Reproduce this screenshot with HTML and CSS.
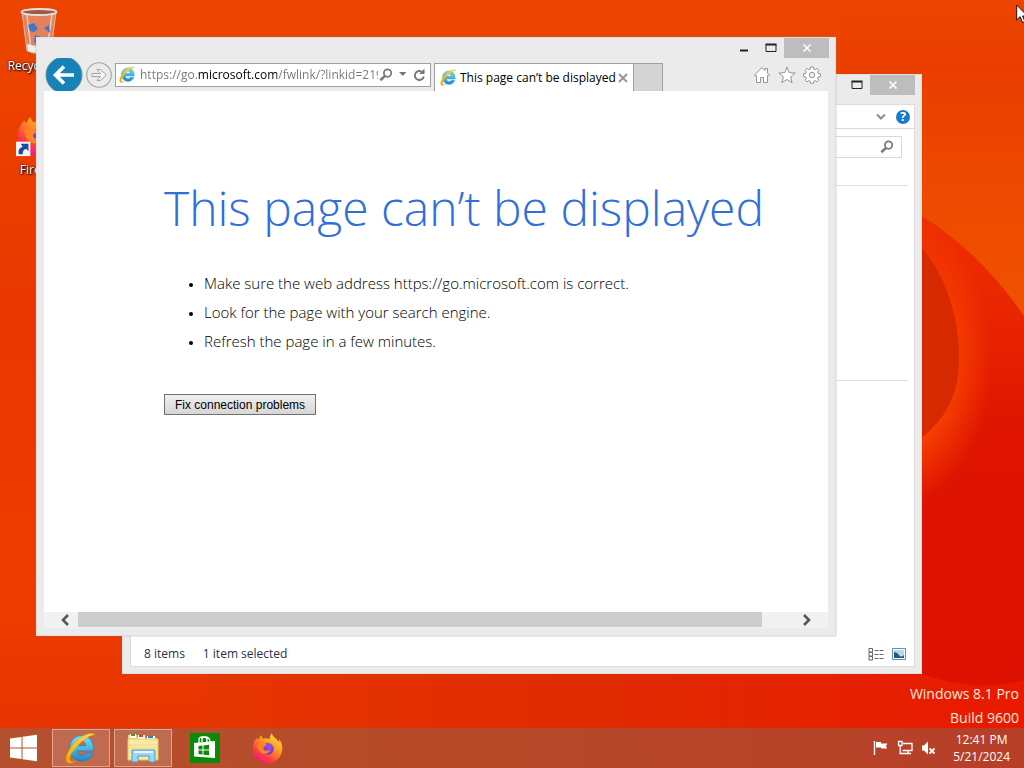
FILE: index.html
```html
<!DOCTYPE html>
<html lang="en">
<head>
<meta charset="utf-8">
<meta name="viewport" content="width=device-width, initial-scale=1">
<title>This page can’t be displayed</title>
<link rel="stylesheet" href="styles.css">
</head>
<body>
<svg width="0" height="0" class="defs" aria-hidden="true">
  <defs>
    <linearGradient id="ieBlue" x1="0" y1="0" x2="0" y2="1"><stop offset="0" stop-color="#7fdcf8"/><stop offset=".5" stop-color="#46b8ea"/><stop offset="1" stop-color="#1e86cf"/></linearGradient>
    <linearGradient id="ieGold" x1="0" y1="1" x2="1" y2="0"><stop offset="0" stop-color="#f2a900"/><stop offset="1" stop-color="#ffe04a"/></linearGradient>
    <linearGradient id="foxFire" x1=".9" y1="0" x2=".2" y2="1"><stop offset="0" stop-color="#fff04a"/><stop offset=".4" stop-color="#ff9a1f"/><stop offset=".75" stop-color="#ff3a48"/><stop offset="1" stop-color="#e31587"/></linearGradient>
    <radialGradient id="foxCore" cx=".6" cy=".3" r=".8"><stop offset="0" stop-color="#a04df0"/><stop offset="1" stop-color="#5636c8"/></radialGradient>
    <symbol id="ie" viewBox="0 0 32 32">
      <path d="M16.600 3.600C9.800 3.600 4.800 9 4.800 16S9.800 29 16.800 29c5.300 0 9.400-2.800 11.200-7.900h-7c-.8 1.500-2.200 2.300-4 2.300-2.800 0-4.700-1.700-4.900-4.500h16.500c.5-9-4.200-15.300-12-15.300zM12.100 13.700c.5-2.700 2.200-4.200 4.600-4.200s4 1.500 4.300 4.200z" fill="url(#ieBlue)" stroke="#1779b8" stroke-width=".6"/>
      <path d="M29.900 3.500C28.600-.4 19.200 1.500 11.300 8.900 3.300 16.400-1 26.900 2.300 30.200c1.800 1.800 5.100.9 8.500-.9-2.800.8-4.900.5-5.700-.8-1.700-3 2.500-9.500 8.300-15.400C19.500 7 27.300 1.400 29.900 3.500z" fill="url(#ieGold)" stroke="#d99a00" stroke-width=".4"/>
    </symbol>
    <symbol id="firefox" viewBox="0 0 32 32">
      <path d="M20.500.500c-2 1.800-2.500 4-1.800 6-2-1-4.500-1.300-6.700-.5-1.500-.8-2-2.300-2-3.700-1.700 1-2.700 2.700-3 4.500-.8-.3-1.400-1-1.700-2C2.500 7.500.8 11.800.8 16c0 8.600 6.700 15.300 15.200 15.300S31.300 24.600 31.300 16c0-3.500-1.200-7-3.300-9.500.2 1.200.2 2.300 0 3.200C26.300 6.200 22 5 20.500.5z" fill="url(#foxFire)"/>
      <circle cx="16.500" cy="16.300" r="6" fill="url(#foxCore)"/>
      <path d="M5.500 11.500c2.500-1.300 4.500-1 6 .2 1.200-.6 2.600-.5 3.800 0-.9 1.700-2.600 2.100-3.300 3.300-.8 1.500.4 3.200 2.500 3.200 1.800 0 3-.8 4.500-.4-.8 3-5 4.600-8.300 3.100-3.700-1.600-5.700-5.200-5.200-9.400z" fill="#ff8320"/>
    </symbol>
    <symbol id="loupe" viewBox="0 0 16 16"><circle cx="9.800" cy="5.800" r="4.200" fill="none" stroke="#777" stroke-width="2"/><path d="M6.600 9.200 1.500 14" stroke="#777" stroke-width="2.800"/></symbol>
  </defs>
</svg>
<main class="desktop">
  <svg class="wallpaper" viewBox="0 0 1024 728" preserveAspectRatio="none" aria-hidden="true">
    <defs>
      <linearGradient id="base" x1="0" y1="0" x2="0" y2="1"><stop offset="0" stop-color="#ed4500"/><stop offset=".45" stop-color="#e83700"/><stop offset=".8" stop-color="#ed3c00"/><stop offset="1" stop-color="#e83400"/></linearGradient>
      <linearGradient id="warm" x1="0" y1="0" x2="0" y2="1"><stop offset="0" stop-color="#ed4500"/><stop offset=".2" stop-color="#ea3e00"/><stop offset=".6" stop-color="#ee4a00"/><stop offset="1" stop-color="#f05200"/></linearGradient>
      <linearGradient id="petal" x1="0" y1="0" x2="0" y2="1"><stop offset="0" stop-color="#ef3300"/><stop offset=".22" stop-color="#ea2600"/><stop offset=".45" stop-color="#df1500"/><stop offset="1" stop-color="#dc1000"/></linearGradient>
      <radialGradient id="glow"><stop offset=".6" stop-color="#f63d00"/><stop offset="1" stop-color="#f63d00" stop-opacity="0"/></radialGradient>
      <linearGradient id="floor" x1="0" y1="0" x2="1" y2="0"><stop offset="0" stop-color="#e63600"/><stop offset=".5" stop-color="#e02a00"/><stop offset="1" stop-color="#e91900"/></linearGradient>
    </defs>
    <rect width="1024" height="728" fill="url(#base)"/>
    <path d="M840 0H1024V330L840 200z" fill="url(#warm)"/>
    <path d="M860 186Q960 222 1024 316V728H780z" fill="url(#petal)"/>
    <ellipse cx="900" cy="360" rx="92" ry="145" fill="url(#glow)"/>
    <path d="M890 220C940 250 959 310 959 357S940 430 890 460z" fill="#d62900"/>
    <path d="M208 673Q207 704 200 728H1024V680Q980 694 918 673z" fill="url(#floor)"/>
  </svg>

  <div class="shortcut bin">
    <svg viewBox="0 0 40 46" aria-hidden="true"><path d="M3 4 8 43q12 5 24 0L37 4z" fill="#d9cfcb" fill-opacity=".45" stroke="#c9c1bd"/><path d="M8 7l4 35M33 7l-5 35" stroke="#fff" stroke-opacity=".6" stroke-width="1.500"/><path d="M8 36q12 4 24 0l-1 7q-11 4-22 0z" fill="#eee"/><ellipse cx="20" cy="4" rx="17.500" ry="3" fill="#9b5a43" stroke="#e7dfda" stroke-width="1.800"/><path d="m9 17 6-2 4 6-4 3-4-1zM15 34l1-7 6 2 2 6-5 3zM25 20l5-3 1 8z" fill="#3c78cf"/></svg>
    <span>Recycle Bin</span>
  </div>
  <div class="shortcut fox">
    <svg viewBox="0 0 48 48" aria-hidden="true"><use href="#firefox" x="1" y="2" width="46" height="46"/><rect x="0" y="31" width="15" height="15" fill="#f4f4f4"/><path d="M3 44c-1-5 1-7 4-7.500L5 33h8v8l-2-2.500c-3 0-4 2-4 5.500z" fill="#174a9c"/></svg>
    <span>Firefox</span>
  </div>

  <section class="window explorer" aria-label="File Explorer">
    <header class="titlebar">
      <button class="cap" aria-label="Maximize"><svg viewBox="0 0 12 10"><path d="M1 1.500h10v7H1z" fill="none" stroke="#222"/><path d="M.5 1.500h11" stroke="#222" stroke-width="2"/></svg></button>
      <button class="cap close" aria-label="Close"><svg viewBox="0 0 10 10"><path d="m1.500 1.500 7 7m0-7-7 7" stroke="#fff" stroke-width="1.600"/></svg></button>
    </header>
    <div class="pane">
      <div class="ribbon">
        <button class="plain" aria-label="Expand ribbon"><svg width="10" height="8" viewBox="0 0 10 8"><path d="m1 1.500 4 4 4-4" fill="none" stroke="#8c8c8c" stroke-width="2"/></svg></button>
        <button class="help" aria-label="Help">?</button>
      </div>
      <div class="search"><input type="text" aria-label="Search"><svg width="14" height="14"><use href="#loupe"/></svg></div>
      <hr class="rule first">
      <hr class="rule second">
      <footer class="status"><span>8 items</span><span>1 item selected</span>
        <button class="plain view" aria-label="Details"><svg width="16" height="13" viewBox="0 0 16 13"><path d="M1 .5h3.500v3.500H1zM1 4.500h3.500V8H1zM1 8.500h3.500V12H1z" fill="#fff" stroke="#666"/><path d="M6.500 2.500h4m1 0h4m-9 4h4m1 0h4m-9 4h4m1 0h4" stroke="#666"/></svg></button>
        <button class="plain" aria-label="Large icons"><svg width="14" height="12" viewBox="0 0 14 12"><path d="M.5.5h13v11H.5z" fill="#fff" stroke="#5b91b8"/><path d="M2 2h10v8H2z" fill="#b5d8e8"/><path d="M2 4q3 0 5 3t5 0v3H2z" fill="#285a78"/></svg></button>
      </footer>
    </div>
  </section>

  <section class="window browser" aria-label="Internet Explorer">
    <header class="titlebar">
      <button class="cap" aria-label="Minimize"><svg viewBox="0 0 12 10"><path d="M2 7.500h8" stroke="#222" stroke-width="2"/></svg></button>
      <button class="cap" aria-label="Maximize"><svg viewBox="0 0 12 10"><path d="M1 1.500h10v7H1z" fill="none" stroke="#222"/><path d="M.5 1.500h11" stroke="#222" stroke-width="2"/></svg></button>
      <button class="cap close" aria-label="Close"><svg viewBox="0 0 10 10"><path d="m1.500 1.500 7 7m0-7-7 7" stroke="#fff" stroke-width="1.600"/></svg></button>
    </header>
    <nav class="toolbar">
      <button class="plain back" aria-label="Back"><svg width="38" height="38" viewBox="0 0 38 38"><circle cx="19" cy="19" r="18" fill="#1583b7" stroke="#6b8d9c"/><path d="M29 19H11m8-8.500L10.500 19l8.500 8.500" fill="none" stroke="#fff" stroke-width="3.600"/></svg></button>
      <button class="plain" aria-label="Forward"><svg width="26" height="26" viewBox="0 0 26 26"><circle cx="13" cy="13" r="12.300" fill="none" stroke="#a3a3a3" stroke-width="1.100"/><path d="M6 11.500h8.500L11 7.500h3.500L20.500 13l-6 5.500H11l3.500-4H6z" fill="#f4f4f4" stroke="#a3a3a3"/></svg></button>
      <div class="address">
        <svg width="17" height="17"><use href="#ie"/></svg>
        <input type="text" aria-label="Address" value="https://go.microsoft.com/fwlink/?linkid=219">
        <button class="plain" aria-label="Search"><svg width="14" height="14"><use href="#loupe"/></svg></button>
        <button class="plain" aria-label="Show address list"><svg width="8" height="5" viewBox="0 0 8 5"><path d="M0 0h7.500L3.800 4z" fill="#777"/></svg></button>
        <button class="plain" aria-label="Refresh"><svg width="13" height="14" viewBox="0 0 13 14"><path d="M10.800 8.500A4.500 4.500 0 1 1 8.500 3.500" fill="none" stroke="#777" stroke-width="1.900"/><path d="M11.500.5v5.500H6z" fill="#777"/></svg></button>
      </div>
      <div class="tab"><svg width="17" height="17"><use href="#ie"/></svg><span>This page can’t be displayed</span><button class="plain" aria-label="Close tab"><svg width="10" height="10" viewBox="0 0 10 10"><path d="m1 1 8 8m0-8L1 9" stroke="#999" stroke-width="2"/></svg></button></div>
      <button class="newtab" aria-label="New tab"></button>
      <div class="tools">
        <button class="plain" aria-label="Home"><svg width="18" height="18" viewBox="0 0 18 18"><path d="M1.500 9 9 1.500 12 4.500V2.500h2.500V7l2 2-1 1.200-1-.8v7.100h-4v-5h-3v5h-4V9.400l-1 .8z" fill="#fff" stroke="#949494"/></svg></button>
        <button class="plain" aria-label="Favorites"><svg width="18" height="18" viewBox="0 0 18 18"><path d="m9 1 2.200 5.600 6 .4-4.600 3.800 1.500 5.900L9 13.500l-5.100 3.200 1.500-5.900L.8 7l6-.4z" fill="#fff" stroke="#949494"/></svg></button>
        <button class="plain" aria-label="Tools"><svg width="18" height="18" viewBox="0 0 18 18"><path d="M7.500 1h3l.4 2.200 1.300.5L14 2.400 15.800 4.300l-1.300 1.800.6 1.300 2.200.3v2.800l-2.200.4-.6 1.300 1.300 1.800-1.900 1.900-1.800-1.300-1.300.5-.4 2.200h-2.900l-.4-2.200-1.300-.5L4 15.900 2.100 14l1.300-1.800-.6-1.300-2.200-.4V7.700l2.200-.3.600-1.300-1.300-1.800L4 2.400l1.800 1.300 1.300-.5z" fill="#fff" stroke="#949494"/><circle cx="9" cy="9" r="2.800" fill="#eee" stroke="#949494"/></svg></button>
      </div>
    </nav>
    <div class="page">
      <article class="error">
        <h1>This page can’t be displayed</h1>
        <ul>
          <li>Make sure the web address https://go.microsoft.com is correct.</li>
          <li>Look for the page with your search engine.</li>
          <li>Refresh the page in a few minutes.</li>
        </ul>
        <button class="fix">Fix connection problems</button>
      </article>
      <div class="scroll">
        <button class="plain" aria-label="Scroll left"><svg width="10" height="12" viewBox="0 0 10 12"><path d="M8 1 3 6l5 5" fill="none" stroke="#555" stroke-width="2.600"/></svg></button>
        <div class="track"><div class="thumb"></div></div>
        <button class="plain" aria-label="Scroll right"><svg width="10" height="12" viewBox="0 0 10 12"><path d="m2 1 5 5-5 5" fill="none" stroke="#555" stroke-width="2.600"/></svg></button>
      </div>
    </div>
  </section>

  <p class="build">Windows 8.1 Pro<br>Build 9600</p>
  <svg class="cursor" width="12" height="20" viewBox="0 0 12 20" aria-hidden="true"><path d="M.7 1v15l3.500-3.300L6.500 18.500l2.500-1-2.500-5.500h5z" fill="#fff" stroke="#111"/></svg>
</main>
<footer class="taskbar">
  <button class="task start" aria-label="Start"><svg width="28" height="28" viewBox="0 0 28 28"><path d="M0 4.500 11.500 3v10.500H0zM12.500 2.800 27 .800v12.700H12.500zM0 14.500h11.500V25L0 23.500zM12.500 14.500H27v12.700l-14.500-2z" fill="#fff"/></svg></button>
  <button class="task open" aria-label="Internet Explorer"><svg width="32" height="32"><use href="#ie"/></svg></button>
  <button class="task open" aria-label="File Explorer"><svg width="32" height="30" viewBox="0 0 32 30"><path d="M1 2h9l1 3h19v22H1z" fill="#e9d479"/><path d="M3 1h6v4H3zM11 2h7v4h-7zM20 3h8v4h-8z" fill="#fff"/><path d="M4 1h4v2H4z" fill="#26a34a"/><path d="M12 2h4v2h-4z" fill="#d8402c"/><path d="M21 3h5v2h-5z" fill="#2f7fc6"/><path d="M1 6h30v21H1z" fill="#f8eaa5" stroke="#e4c866"/><path d="M2 12h28M2 15h28" stroke="#efd984"/><path d="M5 29V17h23v12h-6v-6H11v6z" fill="#9bd7f2" stroke="#479fcd"/><path d="M7 19h19" stroke="#e1f6ff" stroke-width="2"/></svg></button>
  <button class="task" aria-label="Store"><svg width="30" height="30" viewBox="0 0 30 30"><path d="M0 0h30v30H0z" fill="#0b8a08"/><path d="m4 10 21-2v17L4 23.500z" fill="#fff"/><path d="M9 10V7q0-3 3-3h2q3 0 3 3v2M12 9V6q0-2 3-2 5 0 5 5" fill="none" stroke="#fff" stroke-width="1.300"/><path d="M8.500 13l4-.5v4h-4zM13.500 12.400l5.500-.6v4.700h-5.500zM8.500 17.500h4v4l-4-.4zM13.500 17.500H19v4.800l-5.500-.6z" fill="#0b8a08"/></svg></button>
  <button class="task" aria-label="Firefox"><svg width="31" height="31"><use href="#firefox"/></svg></button>
  <div class="tray">
    <svg width="16" height="16" viewBox="0 0 16 16" role="img" aria-label="Action Center"><path d="M1.500 1v14" stroke="#fff" stroke-width="1.400"/><path d="M3 2h5v1.500h6.500L13 6l1 2.500H8V7.500H3z" fill="#fff"/></svg>
    <svg width="16" height="16" viewBox="0 0 16 16" role="img" aria-label="Network"><path d="M6 3.500h9v7H5.500M8 13.500h6M11 11v2M1.500 1.500H5v4H1.500zM3.200 6v7.500H8" fill="none" stroke="#fff" stroke-width="1.300"/></svg>
    <svg width="16" height="16" viewBox="0 0 16 16" role="img" aria-label="Muted"><path d="M1 5.500h2L7 1.500v13L3 10.500H1z" fill="#fff"/><path d="m8.500 8.500 5 5m0-5-5 5" stroke="#fff" stroke-width="1.800"/></svg>
  </div>
  <time class="clock" datetime="2024-05-21T12:41">12:41 PM<br>5/21/2024</time>
</footer>
</body>
</html>
```
FILE: styles.css
```css
* { box-sizing: border-box; }
html, body { height: 100%; margin: 0; }
body {
  display: flex;
  flex-direction: column;
  overflow: hidden;
  font: 12px/16px "Open Sans", "Noto Sans", sans-serif;
  color: #222;
  background: #e83400;
}
button { font: inherit; color: inherit; margin: 0; padding: 0; border: 0; background: none; }
svg { display: block; flex: none; }
.plain { display: flex; align-items: center; }
.defs { position: absolute; }

.desktop { position: relative; flex: 1; min-height: 0; }
.wallpaper { position: absolute; inset: 0; width: 100%; height: 100%; }

.shortcut {
  position: absolute;
  left: 0;
  width: 78px;
  display: flex;
  flex-direction: column;
  align-items: center;
  gap: 4px;
  color: #fff;
  text-shadow: 1px 1px 2px #000, 0 0 2px #000;
}
.bin { top: 8px; }
.bin svg { width: 40px; height: 46px; }
.fox { top: 112px; }
.fox svg { width: 46px; height: 46px; }

.window {
  position: absolute;
  display: flex;
  flex-direction: column;
  background: #ebebeb;
  border: 1px solid #e0e0e0;
}
.explorer { left: 122px; top: 74px; right: 102px; bottom: 54px; }
.browser { left: 36px; top: 37px; right: 188px; bottom: 92px; box-shadow: 0 0 1px #888; }

.titlebar { display: flex; justify-content: flex-end; height: 20px; padding-right: 6px; flex: none; }
.cap { width: 27px; display: flex; align-items: center; justify-content: center; }
.cap svg { width: 12px; height: 10px; }
.close { width: 45px; background: #bdbdbd; }
.close svg { width: 10px; height: 10px; }

.explorer .titlebar { margin-bottom: 9px; }
.pane {
  flex: 1;
  margin: 0 6px 6px 7px;
  background: #fff;
  border: 1px solid #dcdcdc;
  display: flex;
  flex-direction: column;
}
.ribbon {
  height: 24px;
  padding-right: 4px;
  display: flex;
  align-items: center;
  justify-content: flex-end;
  gap: 10px;
  border-bottom: 1px solid #dadada;
}
.help {
  width: 14px;
  height: 14px;
  border-radius: 50%;
  background: #1979ca;
  color: #fff;
  font-weight: 700;
  line-height: 14px;
}
.search {
  display: flex;
  align-items: center;
  align-self: flex-end;
  width: 200px;
  height: 22px;
  margin: 7px 12px 0 0;
  padding-right: 7px;
  border: 1px solid #d9d9d9;
}
.search input { flex: 1; min-width: 0; border: 0; outline: 0; background: none; }
.rule { width: 200px; margin: 0 6px 0 auto; border: 0; border-top: 1px solid #e0e0e0; }
.first { margin-top: 27px; }
.second { margin-top: 194px; }
.status {
  display: flex;
  align-items: center;
  gap: 8px;
  height: 24px;
  margin-top: auto;
  padding: 0 8px 0 13px;
  color: #26324d;
}
.status span { margin-right: 10px; }
.view { margin-left: auto; }

.toolbar { display: flex; align-items: center; height: 33px; padding: 0 14px 0 8px; flex: none; }
.back { height: 33px; margin-right: 3px; align-items: flex-start; overflow: hidden; }
.toolbar .back svg { margin-top: -2px; }
.address {
  display: flex;
  align-items: center;
  width: 316px;
  height: 24px;
  margin: 0 3px;
  padding: 0 4px 0 3px;
  background: #fff;
  border: 1px solid #a0a0a0;
}
.address input {
  flex: 1;
  min-width: 0;
  height: 22px;
  margin: 0 1px 0 4px;
  padding: 0;
  border: 0;
  outline: 0;
  font: inherit;
  color: transparent;
  background: linear-gradient(90deg, #777 57px, #000 57px, #000 137px, #777 137px);
  -webkit-background-clip: text;
  background-clip: text;
}
.address button { margin-left: 6px; }
.address input + button { margin-left: 0; }
.tab {
  display: flex;
  align-items: center;
  align-self: flex-end;
  width: 200px;
  height: 28px;
  padding: 0 5px;
  background: #fff;
  border: 1px solid #a0a0a0;
  border-bottom: 0;
  color: #000;
}
.tab span { flex: 1; margin-left: 3px; white-space: nowrap; }
.newtab { align-self: flex-end; width: 29px; height: 28px; background: #d4d4d4; border: 1px solid #a0a0a0; border-width: 1px 1px 0 0; }
.tools { display: flex; gap: 7px; margin-left: auto; }

.page { flex: 1; margin: 0 7px 7px; background: #fff; display: flex; flex-direction: column; min-height: 0; }
.error { flex: 1; padding: 82px 0 0 120px; overflow: hidden; min-height: 0; color: #000; }
.error h1 {
  margin: 0;
  font: 300 48px/70px "Open Sans", "Noto Sans", sans-serif;
  color: #2f6fdb;
  white-space: nowrap;
}
.error ul { margin: 26px 0 0; padding: 0 0 0 40px; font: 300 15px/29px "Open Sans", "Noto Sans", sans-serif; white-space: nowrap; }
.error li::marker { font-size: 12px; }
.fix {
  margin-top: 38px;
  height: 21px;
  padding: 0 10px;
  border: 1px solid #707070;
  background: linear-gradient(#f0f0f0, #d6d6d6);
  font: 12px/18px "Liberation Sans", sans-serif;
}
.scroll { display: flex; height: 16px; padding: 0 16px; background: #f1f1f1; flex: none; }
.track { flex: 1; margin: 0 40px 0 8px; }
.thumb { height: 15px; background: #cdcdcd; }

.build { position: absolute; right: 5px; bottom: -2px; margin: 0; color: #ffe8dc; font-size: 14px; line-height: 24px; text-align: right; }
.cursor { position: absolute; top: 4px; right: -4px; }

.taskbar {
  position: relative;
  display: flex;
  align-items: center;
  height: 40px;
  flex: none;
  gap: 4px;
  padding-right: 14px;
  background: linear-gradient(90deg, #b5502f, #b64a28 40%, #b73f28);
}
.task { width: 58px; height: 38px; display: flex; align-items: center; justify-content: center; }
.start { width: 48px; }
.open { background: #bf6b50; border: 1px solid #e2a58f; }
.tray { display: flex; gap: 8px; margin-left: auto; }
.clock { margin-left: 12px; color: #fff; line-height: 17px; text-align: center; }
```
